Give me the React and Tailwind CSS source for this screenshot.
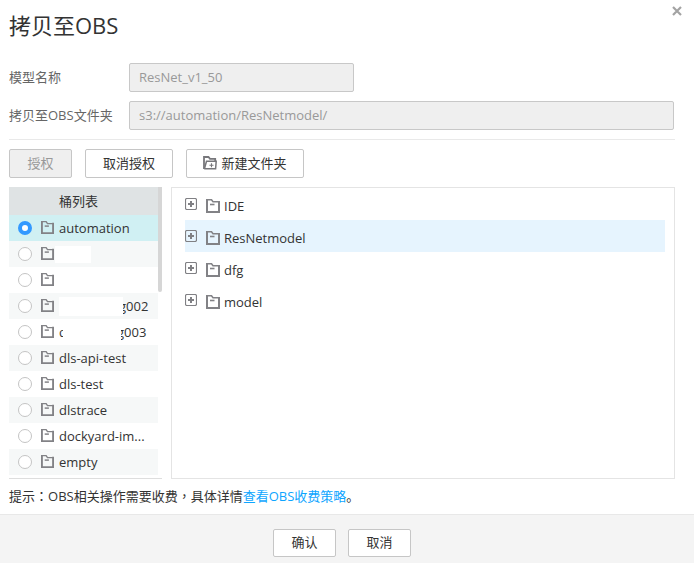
import React, { useState } from "react";

function FolderIcon({ className = "" }) {
  return (
    <svg viewBox="0 0 14 14" fill="none" stroke="#828286" className={"shrink-0 " + className} aria-hidden="true">
      <path d="M1 0V14M0 13H14M13 2V14" strokeWidth="2" />
      <path d="M0 0.7H5.5L7 2.8H14" strokeWidth="1.5" />
      <path d="M4 5.5H8.5" strokeWidth="1.6" />
    </svg>
  );
}

function NewFolderIcon() {
  return (
    <svg width="14" height="14" viewBox="0 0 14 14" fill="none" stroke="#77777b" className="shrink-0" aria-hidden="true">
      <path d="M1 13V1H5.5L7 2.8H12.2V5" strokeWidth="1.8" />
      <path d="M1.5 12.5L3.5 5.3H13.2L12.6 12.7H1.2" strokeWidth="1.5" />
      <path d="M8.5 7.2V11.2M6.5 9.2H10.5" strokeWidth="1.1" />
    </svg>
  );
}

function ExpandIcon() {
  return (
    <svg width="12" height="12" viewBox="0 0 12 12" fill="none" stroke="#808084" aria-hidden="true">
      <rect x="0.5" y="0.5" width="11" height="11" rx="1.5" strokeWidth="1.2" />
      <path d="M6 3V9M3 6H9" strokeWidth="2" />
    </svg>
  );
}

const buckets = [
  { id: "automation", label: "automation" },
  { id: "hidden-a", label: <span className="-ml-1 block h-[17px] w-9 bg-white" /> },
  { id: "hidden-b", label: "" },
  {
    id: "hidden-002",
    label: (
      <span className="flex items-center">
        <span className="z-10 h-[19px] w-16 bg-white" />
        <span className="-ml-1">g002</span>
      </span>
    ),
  },
  {
    id: "hidden-003",
    label: (
      <span className="flex items-center">
        <span>d</span>
        <span className="z-10 -ml-1 h-[19px] w-[58px] bg-white" />
        <span className="-ml-1">g003</span>
      </span>
    ),
  },
  { id: "dls-api-test", label: "dls-api-test" },
  { id: "dls-test", label: "dls-test" },
  { id: "dlstrace", label: "dlstrace" },
  { id: "dockyard", label: "dockyard-im..." },
  { id: "empty", label: "empty" },
];

const folders = ["IDE", "ResNetmodel", "dfg", "model"];

const buttonBase = "flex items-center justify-center rounded-xs border border-[#c6c6c6] pb-0.5";
const fieldBase = "h-[29px] rounded-xs border border-[#c8c8c8] bg-[#efefef] px-[9px] pb-0.5 text-[#999]";

export default function App() {
  const [bucket, setBucket] = useState("automation");
  const [folder, setFolder] = useState("ResNetmodel");

  return (
    <div className="relative flex min-h-screen flex-col bg-white font-['Open_Sans','Noto_Sans_CJK_SC',sans-serif] text-[13px] leading-5 text-[#333]">
      <button type="button" aria-label="关闭" className="absolute top-1.5 right-3 text-[#a3a3a3]">
        <svg width="10" height="10" viewBox="0 0 10 10" stroke="currentColor" strokeWidth="2.2" aria-hidden="true">
          <path d="M1 1L9 9M9 1L1 9" />
        </svg>
      </button>

      <main className="flex-1 pr-[19px] pl-[9px]">
        <h1 className="pt-[9px] text-[22px] leading-8">拷贝至OBS</h1>

        <div className="mt-[22px] flex items-center pr-px">
          <label htmlFor="model-name" className="w-[120px] pb-0.5 text-[#666]">模型名称</label>
          <input id="model-name" disabled value="ResNet_v1_50" className={fieldBase + " w-[225px]"} />
        </div>
        <div className="mt-[9px] flex items-center pr-px">
          <label htmlFor="obs-folder" className="w-[120px] shrink-0 pb-0.5 text-[#666]">拷贝至OBS文件夹</label>
          <input id="obs-folder" disabled value="s3://automation/ResNetmodel/" className={fieldBase + " min-w-0 flex-1"} />
        </div>

        <div className="mt-[9px] flex gap-[13px] border-t border-[#e9e9e9] pt-[9px]">
          <button type="button" disabled className={buttonBase + " h-[29px] w-[63px] bg-[#efefef] text-[#999]"}>授权</button>
          <button type="button" className={buttonBase + " h-[29px] w-[88px] bg-white"}>取消授权</button>
          <button type="button" className={buttonBase + " h-[29px] w-[118px] gap-1 bg-white"}>
            <NewFolderIcon />
            新建文件夹
          </button>
        </div>

        <div className="mt-[9px] flex gap-[9px]">
          <section className="flex w-[153px] shrink-0 border-b border-[#dedede] pb-[3px]">
            <div className="min-w-0 flex-1">
              <h2 className="h-7 bg-[#dfe3e4] pl-[50px] leading-7">桶列表</h2>
              {buckets.map((item, index) => (
                <label
                  key={item.id}
                  className={
                    "flex h-[26px] items-center pl-[9px] " +
                    (bucket === item.id ? "bg-[#d0f0f3]" : index % 2 ? "bg-[#f6f8f8]" : "bg-white")
                  }
                >
                  <input
                    type="radio"
                    name="bucket"
                    aria-label={item.id}
                    checked={bucket === item.id}
                    onChange={() => setBucket(item.id)}
                    className="size-3.5 shrink-0 appearance-none rounded-full border border-[#c4c4c4] bg-white checked:border-4 checked:border-[#3399ff]"
                  />
                  <FolderIcon className="mb-px ml-[9px] size-[13px]" />
                  <span className="ml-[5px] whitespace-nowrap">{item.label}</span>
                </label>
              ))}
            </div>
            <div className="h-[105px] w-1 rounded-b-xs bg-[#d6d6d6]" />
          </section>

          <section className="min-w-0 flex-1 border border-[#e4e4e4] pr-[9px] pl-[13px]">
            <ul>
              {folders.map((name) => (
                <li key={name} className={"flex h-8 items-center " + (folder === name ? "bg-[#e6f4fe]" : "")}>
                  <button type="button" aria-label={"展开 " + name} className="flex">
                    <ExpandIcon />
                  </button>
                  <button type="button" onClick={() => setFolder(name)} className="ml-[9px] flex items-center gap-1 pt-1">
                    <FolderIcon className="size-3.5" />
                    {name}
                  </button>
                </li>
              ))}
            </ul>
          </section>
        </div>

        <p className="mt-[7px] mb-2">
          提示<span lang="zh-TW" className="font-['Noto_Sans_CJK_TC',sans-serif]">：</span>OBS相关操作需要收费<span lang="zh-TW" className="font-['Noto_Sans_CJK_TC',sans-serif]">，</span>具体详情<a href="#pricing" className="text-[#0ea5ff]">查看OBS收费策略</a>。
        </p>
      </main>

      <footer className="flex justify-center gap-3 border-t border-[#e8e8e8] bg-[#f4f4f4] pt-3.5 pb-1.5 pr-[10px]">
        <button type="button" className={buttonBase + " h-7 w-[63px] bg-white"}>确认</button>
        <button type="button" className={buttonBase + " h-7 w-[63px] bg-white"}>取消</button>
      </footer>
    </div>
  );
}
